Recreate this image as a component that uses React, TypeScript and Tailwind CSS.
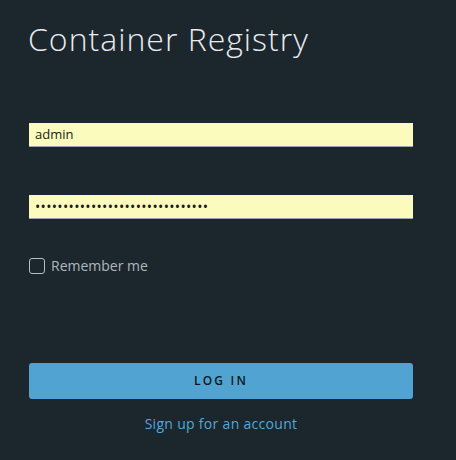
import React from "react";

export default function App() {
  return (
    <div
      className="w-[456px] h-[460px] bg-[#1c262d] overflow-hidden"
      style={{ fontFamily: "'Open Sans', 'Noto Sans', sans-serif" }}
    >
      <div className="pl-[29px] pr-[43px] pt-[18px] flex flex-col">
        <h1 className="text-[32px] leading-[42px] text-[#e9ecef] font-light tracking-[1px] -ml-[1px]">
          Container Registry
        </h1>
        <div className="mt-[63px] h-[24px] bg-[#fafbbd] border-b border-[#9aa5ae] flex items-center px-[6px] text-[13px] text-[#1b1b1b]">
          admin
        </div>
        <div className="mt-[48px] h-[24px] bg-[#fafbbd] border-b border-[#9aa5ae] flex items-center px-[6px] text-[14px] text-[#1b1b1b] tracking-[0.33px]">
          {"•".repeat(31)}
        </div>
        <div className="mt-[36px] flex items-center gap-[6px]">
          <div className="w-[16px] h-[16px] rounded-[3px] border border-[#b4bec5]" />
          <span className="text-[14px] text-[#adb8bf]">Remember me</span>
        </div>
        <button className="mt-[87px] h-[36px] rounded-[3px] bg-[#51a4d1] text-[#0f171c] text-[12px] font-semibold tracking-[2.2px]">
          LOG IN
        </button>
        <div className="mt-[14px] text-center text-[14px] text-[#55a8d6] tracking-[0.3px]">Sign up for an account</div>
      </div>
    </div>
  );
}
